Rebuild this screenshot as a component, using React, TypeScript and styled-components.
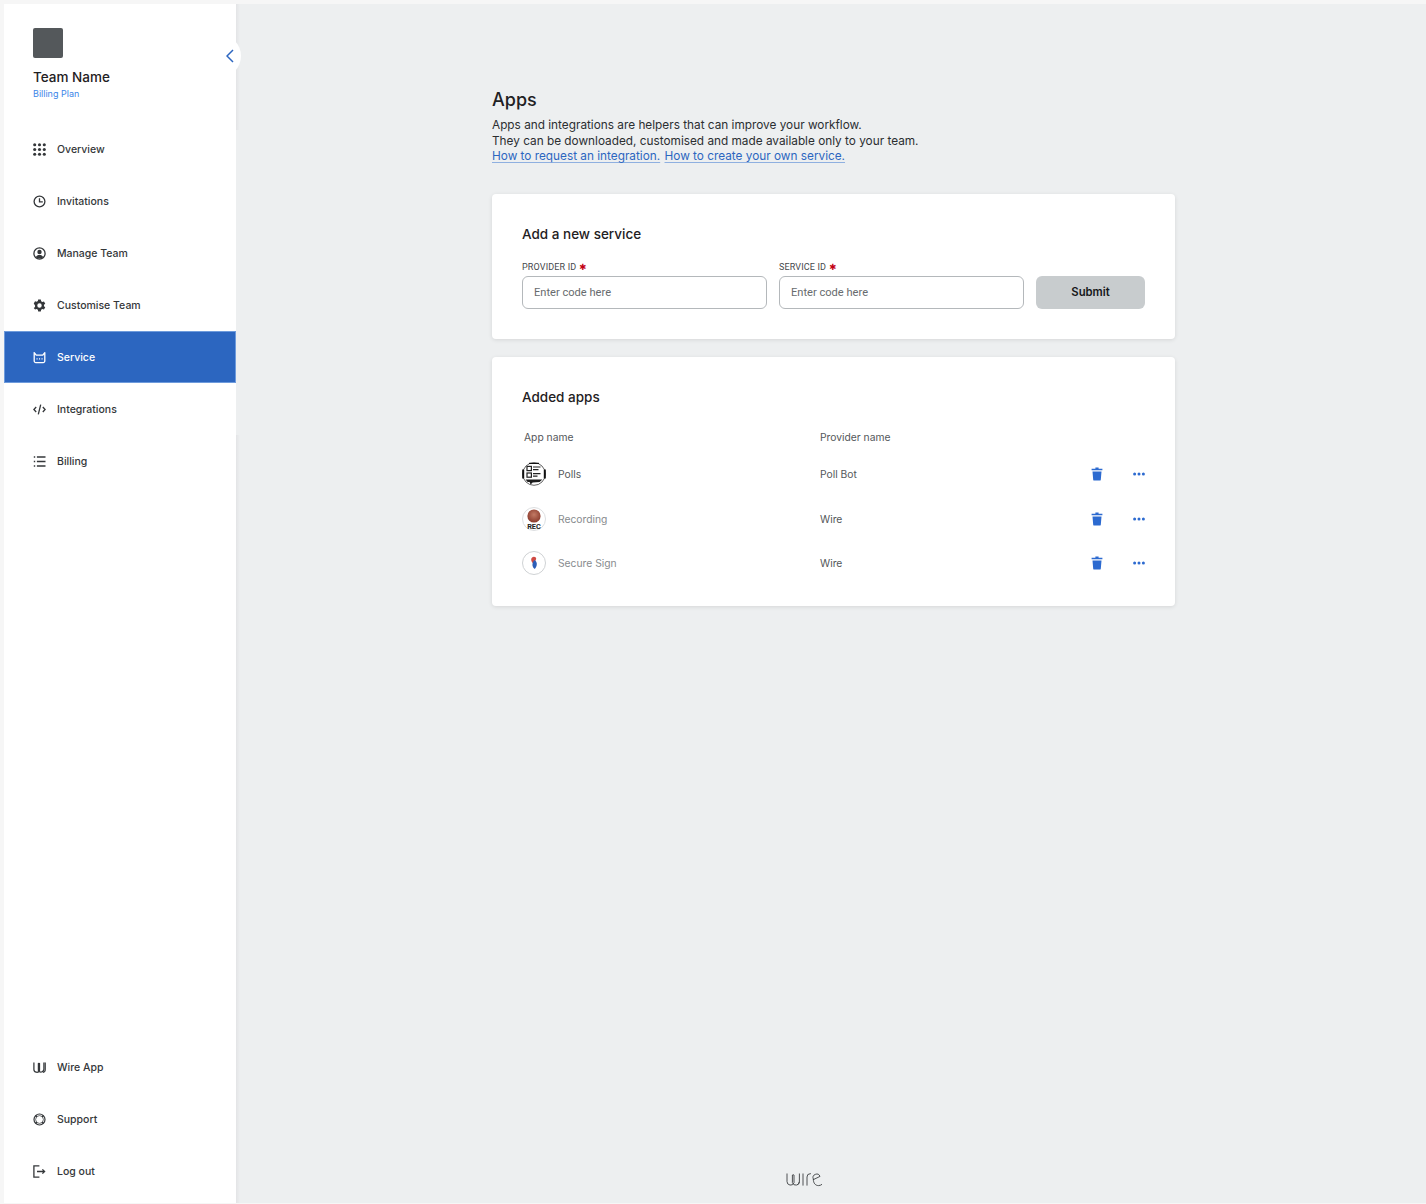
import React from 'react';
import styled, {createGlobalStyle} from 'styled-components';

const GlobalStyle = createGlobalStyle`
  html, body {
    margin: 0;
    padding: 0;
    background: #f6f6f6;
    font-family: Inter, "Liberation Sans", sans-serif;
  }
  * { box-sizing: border-box; }
`

const Page = styled.div`
  display: flex;
  width: 1426px;
  height: 1204px;
  padding: 4px 0 1px 3.5px;
  overflow: hidden;
`

const Sidebar = styled.aside`
  position: relative;
  flex: 0 0 232px;
  display: flex;
  flex-direction: column;
  background: #fff;
`

const ShadowStrip = styled.div<{$top: number, $bottom?: number, $height?: number}>`
  position: absolute;
  left: 100%;
  top: ${p => p.$top}px;
  width: 4px;
  ${p => p.$height ? `height: ${p.$height}px;` : `bottom: ${p.$bottom ?? 0}px;`}
  background: linear-gradient(to right, #e3e4e6, #edeff0);
`

const Notch = styled.button`
  position: absolute;
  left: 193.5px;
  top: 29.5px;
  width: 44px;
  height: 44px;
  display: flex;
  align-items: center;
  justify-content: center;
  padding: 0 0 0 21px;
  border: 0;
  border-radius: 50%;
  background: #fff;
  z-index: 2;
`

const Brand = styled.div`
  height: 119px;
  padding: 24px 0 0 29.5px;
`

const Logo = styled.div`
  width: 30px;
  height: 30px;
  border-radius: 2px;
  background: #54585b;
`

const TeamName = styled.div`
  margin-top: 10px;
  font-size: 13.5px;
  line-height: 18px;
  font-weight: 500;
  color: #1f2123;
`

const Plan = styled.div`
  margin-top: 2px;
  font-size: 9px;
  line-height: 12px;
  color: #3b86e8;
`

const Nav = styled.nav`
  display: flex;
  flex-direction: column;
`

const BottomNav = styled(Nav)`
  margin-top: auto;
  margin-bottom: 6px;
`

const NavItem = styled.a<{$active?: boolean}>`
  display: flex;
  align-items: center;
  gap: 11px;
  height: 52px;
  padding-left: 29.5px;
  font-size: 10.5px;
  font-weight: 500;
  color: ${p => p.$active ? '#fff' : '#34373a'};
  background: ${p => p.$active ? '#2c66c0' : 'transparent'};
  box-shadow: ${p => p.$active ? 'inset 0 0 0 1px #6e9bdc' : 'none'};
`

const NavIcon = styled.svg`
  flex: 0 0 13px;
  width: 13px;
  height: 13px;
`

const Main = styled.main`
  flex: 1;
  display: flex;
  flex-direction: column;
  padding: 84px 0 16px 256.5px;
  background: #edeff0;
`

const Content = styled.div`
  width: 683px;
`

const Title = styled.h1`
  margin: 0;
  font-size: 18px;
  line-height: 24px;
  font-weight: 500;
  color: #1f2123;
`

const Intro = styled.p`
  margin: 6.4px 0 29px;
  font-size: 11.8px;
  line-height: 15.5px;
  color: #2b2e30;
`

const IntroLink = styled.a`
  color: #2c66c0;
  text-decoration: underline;
  text-decoration-color: #8fb0e0;
  text-underline-offset: 2px;
  & + & {
    margin-left: 1px;
  }
`

const Card = styled.section<{$pad: number}>`
  margin-bottom: 18px;
  padding: 30px 30px ${p => p.$pad}px;
  background: #fff;
  border-radius: 4px;
  box-shadow: 0 1px 4px rgba(0, 0, 0, 0.1);
`

const CardTitle = styled.h2`
  margin: 0;
  font-size: 13.5px;
  line-height: 20px;
  font-weight: 500;
  color: #1f2123;
`

const Form = styled.form`
  display: grid;
  grid-template-columns: 245px 245px 109px;
  column-gap: 12px;
  align-items: end;
  margin-top: 17px;
`

const Field = styled.label`
  display: flex;
  flex-direction: column;
  gap: 2px;
`

const FieldLabel = styled.span`
  display: flex;
  align-items: center;
  font-family: Roboto, sans-serif;
  font-size: 9px;
  line-height: 13px;
  letter-spacing: 0.15px;
  color: #45484b;
`

const Required = styled.span`
  margin-left: 3px;
  color: #c20013;
  font-family: "DejaVu Sans", sans-serif;
  font-size: 8.5px;
  line-height: 9px;
`

const Input = styled.input`
  height: 33px;
  padding: 0 11px;
  border: 1px solid #b4b8bb;
  border-radius: 6px;
  background: #fff;
  font-family: Roboto, sans-serif;
  font-size: 11.1px;
  outline: none;
  &::placeholder {
    color: #676b6e;
    opacity: 1;
  }
`

const Submit = styled.button`
  height: 33px;
  border: 0;
  border-radius: 6px;
  background: #c8ccce;
  font-family: Inter, sans-serif;
  font-size: 11.3px;
  font-weight: 600;
  color: #17181a;
`

const TableHead = styled.div`
  display: grid;
  grid-template-columns: 296px 1fr;
  margin: 18px 0 2px;
  height: 25px;
  padding-left: 2px;
  align-items: center;
  font-size: 10.3px;
  color: #55585b;
`

const Row = styled.div`
  display: grid;
  grid-template-columns: 298px 271px 12px 42px;
  align-items: center;
  height: 44.5px;
  font-size: 10.3px;
  color: #54575a;
`

const AppCell = styled.div<{$muted?: boolean}>`
  display: flex;
  align-items: center;
  gap: 12px;
  color: ${p => p.$muted ? '#888b8e' : '#54575a'};
`

const AppIcon = styled.svg`
  width: 24px;
  height: 24px;
`

const TrashSvg = styled.svg`
  display: block;
  justify-self: center;
`

const DotsSvg = styled.svg`
  display: block;
  justify-self: end;
`

const Footer = styled.footer`
  margin-top: auto;
  padding-left: 294px;
  line-height: 0;
`

const GridIcon = () => (
  <NavIcon viewBox="0 0 13 13" fill="currentColor">
    {[1.7, 6.5, 11.3].flatMap(y => [1.7, 6.5, 11.3].map(x => <circle key={`${x}-${y}`} cx={x} cy={y} r="1.55" />))}
  </NavIcon>
)

const ClockIcon = () => (
  <NavIcon viewBox="0 0 13 13" fill="none" stroke="currentColor" strokeWidth="1.3">
    <circle cx="6.5" cy="6.5" r="5.4" />
    <path d="M6.5 3.2V6.9H9.8" />
  </NavIcon>
)

const UserIcon = () => (
  <NavIcon viewBox="0 0 13 13">
    <circle cx="6.5" cy="6.5" r="5.6" fill="none" stroke="currentColor" strokeWidth="1.3" />
    <circle cx="6.5" cy="5" r="2.2" fill="currentColor" />
    <path d="M2.8 10.2C3.4 8.6 4.8 8 6.5 8s3.1.6 3.7 2.2A5 5 0 0 1 6.5 11.6a5 5 0 0 1-3.7-1.4Z" fill="currentColor" />
  </NavIcon>
)

const GearIcon = () => (
  <NavIcon viewBox="0 0 14 14">
    <path
      fill="currentColor"
      fillRule="evenodd"
      d="M5.6.6h2.8l.4 1.8 1.2.7 1.8-.5 1.4 2.4-1.4 1.3v1.4l1.4 1.3-1.4 2.4-1.8-.5-1.2.7-.4 1.8H5.6l-.4-1.8-1.2-.7-1.8.5L.8 9.8l1.4-1.3V6.9L.8 4.8l1.4-2.4 1.8.5 1.2-.7.4-1.8ZM7 4.6a2.4 2.4 0 1 0 0 4.8 2.4 2.4 0 0 0 0-4.8Z"
    />
  </NavIcon>
)

const BotIcon = () => (
  <NavIcon viewBox="0 0 13 13" fill="none" stroke="currentColor" strokeWidth="1.3">
    <path d="M1.2 1.6V10a1.6 1.6 0 0 0 1.6 1.6h7.4a1.6 1.6 0 0 0 1.6-1.6V1.6L9.8 4.2H3.2L1.2 1.6Z" strokeLinejoin="round" />
    <path d="M3.5 7.9h1.1M6 7.9h1.1M8.5 7.9h1.1" strokeWidth="1.2" />
  </NavIcon>
)

const CodeIcon = () => (
  <NavIcon viewBox="0 0 13 13" fill="none" stroke="currentColor" strokeWidth="1.3">
    <path d="M3.2 4 .9 6.5l2.3 2.5M9.8 4l2.3 2.5L9.8 9M7.7 1.6 5.3 11.4" />
  </NavIcon>
)

const ListIcon = () => (
  <NavIcon viewBox="0 0 13 13" fill="none" stroke="currentColor" strokeWidth="1.3">
    <path d="M.8 2h1.4M.8 6.5h1.4M.8 11h1.4M3.9 2h8.6M3.9 6.5h8.6M3.9 11h8.6" />
  </NavIcon>
)

const WireIcon = () => (
  <NavIcon viewBox="0 0 13 13" fill="none" stroke="currentColor" strokeWidth="1.25">
    <path d="M.9 1.5V8.4a2.9 2.9 0 0 0 5.6 1V2.6a.9.9 0 0 0-1.1 0V9.4a2.9 2.9 0 0 0 5.5-1V1.5" />
    <path d="M12.2 1.5V8.6a2.8 2.8 0 0 1-2.2 2.9" />
  </NavIcon>
)

const SupportIcon = () => (
  <NavIcon viewBox="0 0 13 13" fill="none" stroke="currentColor">
    <circle cx="6.5" cy="6.5" r="5.5" strokeWidth="1.2" />
    <circle cx="6.5" cy="6.5" r="3.9" strokeWidth="0.7" />
    <path d="M2.6 2.6 4 4M10.4 2.6 9 4M2.6 10.4 4 9M10.4 10.4 9 9" strokeWidth="1.5" />
  </NavIcon>
)

const LogoutIcon = () => (
  <NavIcon viewBox="0 0 13 13" fill="none" stroke="currentColor" strokeWidth="1.3">
    <path d="M6.4.9H.9V12.1H6.4" />
    <path d="M4 6.5H11.6M9.4 4.4 11.6 6.5 9.4 8.6" />
  </NavIcon>
)

const Chevron = () => (
  <svg width="8" height="14" viewBox="0 0 8 14" fill="none" stroke="#2c66c0" strokeWidth="1.5">
    <path d="M7 1 1 7l6 6" />
  </svg>
)

const PollsIcon = () => (
  <AppIcon viewBox="0 0 24 24">
    <circle cx="12" cy="12" r="11.3" fill="#fff" stroke="#3a3a3a" strokeWidth="0.8" />
    <path d="M1.2 7.5v9M22.8 7.5v9" stroke="#111" strokeWidth="2" />
    <path d="M7 1.4H17" stroke="#111" strokeWidth="1.2" />
    <g fill="none" stroke="#222" strokeWidth="1.2">
      <rect x="5" y="4.4" width="4.4" height="4.2" />
      <rect x="5" y="11" width="4.4" height="4.2" />
      <path d="M11 5H18.5M11 7.6H16.5M11 11.6H18.5M11 14.2H15.5" />
    </g>
    <path d="M3.6 17.5H20.4L17.6 20 10.6 20.4 8.6 22.6 7.6 20H5.6Z" fill="#1c1c1c" />
  </AppIcon>
)

const RecordingIcon = () => (
  <AppIcon viewBox="0 0 24 24">
    <defs>
      <radialGradient id="rec" cx="50%" cy="40%" r="60%">
        <stop offset="0" stopColor="#c27a64" />
        <stop offset="1" stopColor="#8a3a2c" />
      </radialGradient>
    </defs>
    <circle cx="12" cy="12" r="11.5" fill="#fff" stroke="#dcdee0" />
    <circle cx="12" cy="9" r="6.6" fill="url(#rec)" />
    <text x="12" y="21.6" textAnchor="middle" fontFamily="Roboto, sans-serif" fontSize="7.4" fontWeight="700" fill="#222">REC</text>
  </AppIcon>
)

const SignIcon = () => (
  <AppIcon viewBox="0 0 24 24">
    <circle cx="12" cy="12" r="11.5" fill="#fff" stroke="#cfd2d4" />
    <path d="M9.2 9c-.5-2.8 3-4.4 4.6-2.4.7 1 .3 2-.3 3L12 13C10.4 12 9.5 10.6 9.2 9Z" fill="#cf4a44" />
    <path d="M12.6 9c2.8 1.8 3 6 .2 9-2.6-1.6-3.6-5.6-.2-9Z" fill="#2c5fb8" />
  </AppIcon>
)

const TrashIcon = () => (
  <TrashSvg width="12" height="14" viewBox="0 0 12 14" fill="#2c6ad0">
    <path d="M4.4.6h3.2v1.2H11.4v1.5H.6V1.8H4.4Z" />
    <path d="M1.5 4.4h9l-.7 8.3a1 1 0 0 1-1 .9H3.2a1 1 0 0 1-1-.9Z" />
  </TrashSvg>
)

const DotsIcon = () => (
  <DotsSvg width="12" height="4" viewBox="0 0 12 4" fill="#2c6ad0">
    <circle cx="1.6" cy="2" r="1.5" />
    <circle cx="6" cy="2" r="1.5" />
    <circle cx="10.4" cy="2" r="1.5" />
  </DotsSvg>
)

const WireLogo = () => (
  <svg width="37" height="15" viewBox="0 0 37 15" fill="none" stroke="#3c3f42" strokeWidth="0.9">
    <path d="M1 1.5V9.5a3.6 3.6 0 0 0 7 1.2V3a1.3 1.3 0 0 0-1.6 0v7.7a3.6 3.6 0 0 0 7 -1.2V1.5" />
    <path d="M13.4 9.5a3.6 3.6 0 0 1-1.8 3.2" />
    <path d="M17 1.5V13.6" />
    <path d="M21 13.6V5a3.3 3.3 0 0 1 3.3-3.3H25" />
    <path d="M27 7.8 34 4.4a3.2 3.2 0 0 0-6.7 2.6c0 4 2 6.6 5.2 6.6 1.4 0 2.5-.5 3.5-1.3" />
  </svg>
)

const topNav = [
  {label: 'Overview', icon: <GridIcon />},
  {label: 'Invitations', icon: <ClockIcon />},
  {label: 'Manage Team', icon: <UserIcon />},
  {label: 'Customise Team', icon: <GearIcon />},
  {label: 'Service', icon: <BotIcon />, active: true},
  {label: 'Integrations', icon: <CodeIcon />},
  {label: 'Billing', icon: <ListIcon />},
]

const bottomNav = [
  {label: 'Wire App', icon: <WireIcon />},
  {label: 'Support', icon: <SupportIcon />},
  {label: 'Log out', icon: <LogoutIcon />},
]

const apps = [
  {name: 'Polls', provider: 'Poll Bot', icon: <PollsIcon />},
  {name: 'Recording', provider: 'Wire', icon: <RecordingIcon />, muted: true},
  {name: 'Secure Sign', provider: 'Wire', icon: <SignIcon />, muted: true},
]

const App: React.FC = () => {
  return (
    <Page>
      <GlobalStyle />
      <Sidebar>
        <ShadowStrip $top={0} $height={126} />
        <ShadowStrip $top={431} />
        <Notch aria-label="Collapse"><Chevron /></Notch>
        <Brand>
          <Logo />
          <TeamName>Team Name</TeamName>
          <Plan>Billing Plan</Plan>
        </Brand>
        <Nav>
          {topNav.map(item => (
            <NavItem key={item.label} $active={item.active}>
              {item.icon}
              {item.label}
            </NavItem>
          ))}
        </Nav>
        <BottomNav>
          {bottomNav.map(item => (
            <NavItem key={item.label}>
              {item.icon}
              {item.label}
            </NavItem>
          ))}
        </BottomNav>
      </Sidebar>
      <Main>
        <Content>
          <Title>Apps</Title>
          <Intro>
            Apps and integrations are helpers that can improve your workflow.<br />
            They can be downloaded, customised and made available only to your team.<br />
            <IntroLink>How to request an integration.</IntroLink>{' '}
            <IntroLink>How to create your own service.</IntroLink>
          </Intro>
          <Card $pad={30}>
            <CardTitle>Add a new service</CardTitle>
            <Form>
              <Field>
                <FieldLabel>PROVIDER ID<Required>✱</Required></FieldLabel>
                <Input placeholder="Enter code here" />
              </Field>
              <Field>
                <FieldLabel>SERVICE ID<Required>✱</Required></FieldLabel>
                <Input placeholder="Enter code here" />
              </Field>
              <Submit type="button">Submit</Submit>
            </Form>
          </Card>
          <Card $pad={21}>
            <CardTitle>Added apps</CardTitle>
            <TableHead>
              <span>App name</span>
              <span>Provider name</span>
            </TableHead>
            {apps.map(app => (
              <Row key={app.name}>
                <AppCell $muted={app.muted}>
                  {app.icon}
                  {app.name}
                </AppCell>
                <span>{app.provider}</span>
                <TrashIcon />
                <DotsIcon />
              </Row>
            ))}
          </Card>
        </Content>
        <Footer><WireLogo /></Footer>
      </Main>
    </Page>
  )
}

export default App;
